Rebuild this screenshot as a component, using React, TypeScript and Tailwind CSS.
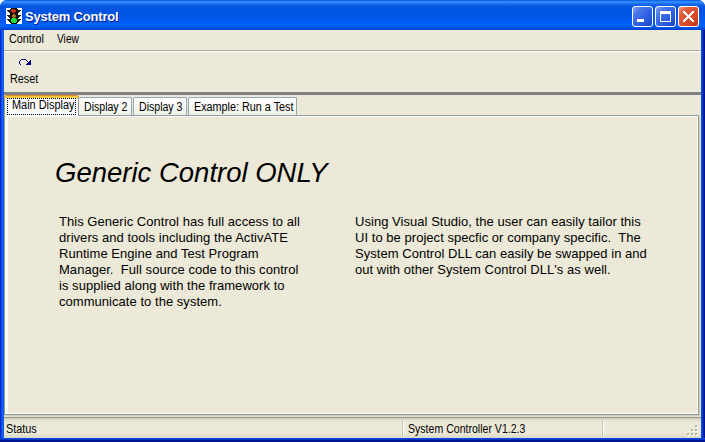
import React from "react";

const uiFont = "font-['Liberation_Sans',Arial,sans-serif]";

function TrafficLight() {
  return (
    <svg width="16" height="16" viewBox="0 0 16 16" shapeRendering="crispEdges">
      <rect width="16" height="16" fill="#fff" />
      <path d="M1 2h14v1h-1v1h-1v1h-10v-1h-1v-1h-1zM1 7h14v1h-1v1h-1v1h-10v-1h-1v-1h-1zM1 11h14v1h-1v1h-1v1h-10v-1h-1v-1h-1z" fill="#222" />
      <path d="M4 1h1v-1h6v1h1v14h-1v1h-6v-1h-1z" fill="#181008" />
      <path d="M6 1h3v1h1v2h-1v1h-3v-1h-1v-2h1z" fill="#c0281a" />
      <path d="M7 6h2v1h1v2h-1v1h-2v-1h-1v-2h1z" fill="#9a7614" />
      <path d="M6 10h4v1h1v3h-1v1h-4v-1h-1v-3h1z" fill="#10e53c" />
      <path d="M6 2h1v1h-1zM7 7h1v1h-1z" fill="#e07030" />
    </svg>
  );
}

function CaptionButton({ kind }: { kind: "min" | "max" | "close" }) {
  const fill =
    kind === "close"
      ? "bg-[linear-gradient(135deg,#ef9b84_0%,#e2603e_25%,#da4a26_65%,#b93514_100%)]"
      : "bg-[linear-gradient(135deg,#86a5f3_0%,#4977ea_25%,#2a5ce2_65%,#1d46c6_100%)]";
  return (
    <div className={`h-[21px] w-[21px] rounded-[3px] border border-white ${fill}`}>
      <svg width="19" height="19" shapeRendering="crispEdges" fill="#fff">
        {kind === "min" && <rect x="4" y="12" width="7" height="3" />}
        {kind === "max" && <path fillRule="evenodd" d="M4 4h11v11h-11zM5 7v7h9v-7z" />}
        {kind === "close" && (
          <path d="M4 4h2v1h1v1h1v1h1v1h1v-1h1v-1h1v-1h1v-1h2v2h-1v1h-1v1h-1v1h-1v1h1v1h1v1h1v1h1v2h-2v-1h-1v-1h-1v-1h-1v-1h-1v1h-1v1h-1v1h-1v1h-2v-2h1v-1h1v-1h1v-1h1v-1h-1v-1h-1v-1h-1v-1h-1z" />
        )}
      </svg>
    </div>
  );
}

// Condensed label, close to the narrow Windows dialog face.
function Label({ children, className }: { children: React.ReactNode; className: string }) {
  return <span className={`block w-max origin-left ${className}`}>{children}</span>;
}

function Tab({ children, className }: { children: React.ReactNode; className: string }) {
  return (
    <div
      className={`h-[18px] rounded-t-[2px] border border-b-0 border-[#91a7b4] bg-gradient-to-b from-white to-[#f0f0ea] pl-[5px] pt-[1px] leading-[17px] ${className}`}
    >
      {children}
    </div>
  );
}

export default function App() {
  return (
    <div className={`flex h-[442px] w-[705px] flex-col overflow-hidden bg-white text-[12px] whitespace-pre text-black ${uiFont}`}>
      <div className="flex h-full flex-col rounded-t-[7px] bg-[linear-gradient(90deg,#0019cf_0,#0831d9_1px,#166aee_2px,#0855dd_4px,#0855dd_701px,#0441d8_702px,#001da0_704px,#00138c_705px)]">
        <header className="flex h-[30px] shrink-0 items-start rounded-t-[7px] bg-[linear-gradient(180deg,#0058e0_0px,#3a93ff_2px,#1668ec_4px,#0355e0_7px,#0054e3_14px,#005bf5_21px,#0062fc_26px,#0050e0_28px,#003dd0_30px)] pl-[6px] pr-[6px]">
          <div className="mt-[8px]">
            <TrafficLight />
          </div>
          <h1 className="ml-[3px] mt-[9px] text-[13px] leading-[16px] font-bold text-white tracking-[-0.18px] [text-shadow:1px_1px_#0a1883]">
            System Control
          </h1>
          <div className="ml-auto mt-[6px] flex gap-[2px]">
            <CaptionButton kind="min" />
            <CaptionButton kind="max" />
            <CaptionButton kind="close" />
          </div>
        </header>

        <main className="mx-[4px] flex h-[408px] shrink-0 flex-col bg-[#ece9d8]">
          <nav className="flex h-[20px] items-start pl-[5px] leading-[18px]">
            <div className="w-[48px]">
              <Label className="scale-x-[0.9]">Control</Label>
            </div>
            <Label className="scale-x-[0.85]">View</Label>
          </nav>
          <div className="h-[2px] border-t border-[#aca899] bg-white" />
          <div className="flex h-[40px] flex-col pl-[6px]">
            <svg className="ml-[8px] mt-[6px]" width="14" height="8" shapeRendering="crispEdges" fill="#000080">
              <path d="M3 1h5v1h-5zM2 2h1v1h-1zM8 2h1v1h-1zM1 3h1v3h-1zM2 6h1v1h-1zM9 3h1v1h-1zM12 2h1v5h-5v-1h1v-1h1v-1h1v-1h1z" />
            </svg>
            <Label className="mt-[5px] leading-[16px] scale-x-[0.9]">Reset</Label>
          </div>
          <div className="h-[3px] bg-[#808080]" />

          <div className="flex h-[20px] items-end">
            <div className="relative z-10 -mb-[1px] h-[20px] w-[75px] rounded-t-[3px] border-x border-t-2 border-x-[#919b9c] border-t-[#ffc73c] bg-[#fcfcfe] px-[2px] shadow-[0_-1px_#e68b2c]">
              <div className="h-[17px] border border-dotted border-black pl-[4px] leading-[13px]">
                <Label className="scale-x-[0.91]">Main Display</Label>
              </div>
            </div>
            <Tab className="w-[53px] border-l-0">
              <Label className="scale-x-[0.88]">Display 2</Label>
            </Tab>
            <Tab className="ml-[1px] w-[54px]">
              <Label className="scale-x-[0.88]">Display 3</Label>
            </Tab>
            <Tab className="ml-[1px] w-[109px]">
              <Label className="scale-x-[0.9]">Example: Run a Test</Label>
            </Tab>
          </div>

          <section className="mr-[2px] flex h-[300px] flex-col border border-[#919b9c] shadow-[1px_1px_#d0cebf,2px_2px_#e3e0d0]">
            <div className="h-full border border-l-[3px] border-[#fcfcfe] pl-[46px] pt-[39px]">
              <h2 className="pl-px text-[27.5px] leading-[34px] italic tracking-[0px]">Generic Control ONLY</h2>
              <div className="mt-[24px] flex pl-[5px] text-[13px] leading-[16px] tracking-[0.04px]">
                <div className="w-[296px]">
                  <p>This Generic Control has full access to all</p>
                  <p>drivers and tools including the ActivATE</p>
                  <p>Runtime Engine and Test Program</p>
                  <p>Manager.  Full source code to this control</p>
                  <p>is supplied along with the framework to</p>
                  <p>communicate to the system.</p>
                </div>
                <div>
                  <p>Using Visual Studio, the user can easily tailor this</p>
                  <p>UI to be project specfic or company specific.  The</p>
                  <p>System Control DLL can easily be swapped in and</p>
                  <p>out with other System Control DLL's as well.</p>
                </div>
              </div>
            </div>
          </section>

          <footer className="mt-[2px] flex h-[21px] border-t border-[#9b998c] bg-[linear-gradient(180deg,#c9c7ba_0,#e3e0d0_2px,#ece9d8_5px,#ece9d8_15px,#dad8c8_20px)] leading-[22px]">
            <div className="w-[398px] pl-[2px]">
              <Label className="scale-x-[0.9]">Status</Label>
            </div>
            <div className="mt-[3px] h-[15px] w-[2px] border-l border-[#c7c5b2] bg-white" />
            <div className="w-[198px] pl-[4px]">
              <Label className="scale-x-[0.88]">System Controller V1.2.3</Label>
            </div>
            <div className="mt-[3px] h-[15px] w-[2px] border-l border-[#c7c5b2] bg-white" />
            <svg className="ml-auto mr-[2px] mt-[7px]" width="12" height="12" shapeRendering="crispEdges">
              <path fill="#fff" d="M9 1h2v2h-2zM5 5h2v2h-2zM9 5h2v2h-2zM1 9h2v2h-2zM5 9h2v2h-2zM9 9h2v2h-2z" />
              <path fill="#b8b4a2" d="M8 0h2v2h-2zM4 4h2v2h-2zM8 4h2v2h-2zM0 8h2v2h-2zM4 8h2v2h-2zM8 8h2v2h-2z" />
            </svg>
          </footer>
        </main>
        <div className="h-[4px] bg-[linear-gradient(180deg,#0855f0_0,#0441d8_1px,#001da0_2px,#00138c_4px)]" />
      </div>
    </div>
  );
}
